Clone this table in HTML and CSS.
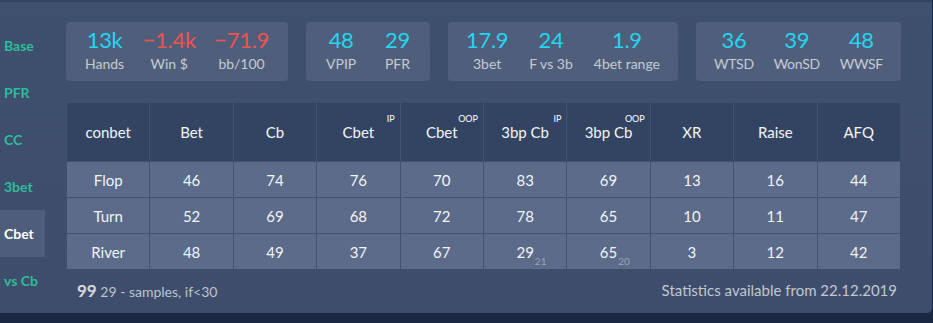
FILE: index.html
```html
<!DOCTYPE html>
<html lang="en">
<head>
<meta charset="utf-8">
<title>Stats</title>
<link rel="stylesheet" href="styles.css">
</head>
<body>
<div class="panel">
  <nav class="side">
    <div class="tab">Base</div>
    <div class="tab">PFR</div>
    <div class="tab">CC</div>
    <div class="tab">3bet</div>
    <div class="tab active">Cbet</div>
    <div class="tab">vs Cb</div>
  </nav>
  <main class="content">
    <div class="stats">
      <div class="box box-results">
        <div class="stat"><span class="num">13k</span><span class="lbl">Hands</span></div>
        <div class="stat"><span class="num neg">−1.4k</span><span class="lbl">Win $</span></div>
        <div class="stat"><span class="num neg">−71.9</span><span class="lbl">bb/100</span></div>
      </div>
      <div class="box box-preflop">
        <div class="stat"><span class="num">48</span><span class="lbl">VPIP</span></div>
        <div class="stat"><span class="num">29</span><span class="lbl">PFR</span></div>
      </div>
      <div class="box box-3bet">
        <div class="stat"><span class="num">17.9</span><span class="lbl">3bet</span></div>
        <div class="stat"><span class="num">24</span><span class="lbl">F vs 3b</span></div>
        <div class="stat"><span class="num">1.9</span><span class="lbl">4bet range</span></div>
      </div>
      <div class="box box-showdown">
        <div class="stat"><span class="num">36</span><span class="lbl">WTSD</span></div>
        <div class="stat"><span class="num">39</span><span class="lbl">WonSD</span></div>
        <div class="stat"><span class="num">48</span><span class="lbl">WWSF</span></div>
      </div>
    </div>

    <table class="grid">
      <thead>
        <tr>
          <th>conbet</th>
          <th>Bet</th>
          <th>Cb</th>
          <th>Cbet<sup class="pos">IP</sup></th>
          <th>Cbet<sup class="pos">OOP</sup></th>
          <th>3bp Cb<sup class="pos">IP</sup></th>
          <th>3bp Cb<sup class="pos">OOP</sup></th>
          <th>XR</th>
          <th>Raise</th>
          <th>AFQ</th>
        </tr>
      </thead>
      <tbody>
        <tr>
          <td>Flop</td><td>46</td><td>74</td><td>76</td><td>70</td><td>83</td><td>69</td><td>13</td><td>16</td><td>44</td>
        </tr>
        <tr>
          <td>Turn</td><td>52</td><td>69</td><td>68</td><td>72</td><td>78</td><td>65</td><td>10</td><td>11</td><td>47</td>
        </tr>
        <tr>
          <td>River</td><td>48</td><td>49</td><td>37</td><td>67</td>
          <td><span class="val">29<span class="sample">21</span></span></td>
          <td><span class="val">65<span class="sample">20</span></span></td>
          <td>3</td><td>12</td><td>42</td>
        </tr>
      </tbody>
    </table>

    <div class="foot">
      <div class="note"><b>99</b> 29 - samples, if&lt;30</div>
      <div class="since">Statistics available from 22.12.2019</div>
    </div>
  </main>
</div>
</body>
</html>
```

FILE: styles.css
```css
* { box-sizing: border-box; }

html, body {
  margin: 0;
  padding: 0;
  background: #1b2844;
  font-family: Lato, "Liberation Sans", sans-serif;
}

.panel {
  width: 932px;
  height: 313px;
  display: flex;
  background: linear-gradient(180deg, #3f4f6e 0%, #3d4d6b 100%);
  border-top: 2px solid #36455f;
  border-bottom-right-radius: 5px;
}

.side {
  width: 45px;
  flex: none;
  padding-top: 20px;
  display: flex;
  flex-direction: column;
}

.tab {
  height: 47px;
  display: flex;
  align-items: center;
  padding-left: 4px;
  font-size: 14px;
  font-weight: 700;
  color: #2dbd98;
}

.tab.active {
  background: #4e5d79;
  color: #ffffff;
}

.content {
  flex: 1;
  padding: 20px 0 0 21px;
  display: flex;
  flex-direction: column;
}

.stats {
  display: flex;
  gap: 18px;
}

.box {
  height: 59px;
  display: flex;
  justify-content: space-between;
  padding: 0 19px;
  background: #4f5f7b;
  border-radius: 4px;
}

.box-results { width: 222px; }
.box-preflop { width: 124px; padding: 0 20px; }
.box-3bet { width: 230px; padding: 0 18px; }
.box-showdown { width: 205px; padding: 0 18px; }

.stat {
  display: flex;
  flex-direction: column;
  align-items: center;
  padding-top: 3px;
  white-space: nowrap;
}

.num {
  font-size: 22px;
  line-height: 30px;
  letter-spacing: -0.3px;
  color: #22d5f0;
}

.num.neg {
  color: #ef5150;
}

.lbl {
  font-size: 14px;
  line-height: 18px;
  color: #c6cad3;
}

.box-showdown .lbl { letter-spacing: -0.3px; }

.grid {
  margin-top: 21px;
  width: 835px;
  table-layout: fixed;
  border-collapse: collapse;
  border: 1px solid #3e4e6c;
}

.grid th,
.grid td {
  border: 1px solid #43536f;
  text-align: center;
  position: relative;
  color: #f2f4f8;
}

.grid tr > :first-child { border-left-color: #3e4e6c; }
.grid tr > :last-child { border-right-color: #3e4e6c; }
.grid thead th { border-top-color: #3e4e6c; }
.grid tbody tr:last-child td { border-bottom-color: #3e4e6c; }

.grid th {
  height: 59px;
  background: #334462;
  font-size: 15px;
  font-weight: 400;
  padding: 0;
}

.grid td {
  height: 36px;
  background: #5b6b89;
  font-size: 15px;
  padding: 0;
}

.pos {
  position: absolute;
  top: 11px;
  right: 5px;
  font-size: 9px;
  line-height: 10px;
  color: #ffffff;
}

.val {
  position: relative;
}

.sample {
  position: absolute;
  left: 100%;
  bottom: -6px;
  margin-left: 1px;
  font-size: 10px;
  color: #98a3b6;
}

.foot {
  width: 835px;
  display: flex;
  justify-content: space-between;
  align-items: center;
  padding: 0 4px 0 11px;
  height: 40px;
}

.note {
  font-size: 14px;
  color: #bfc4ce;
}

.note b {
  font-size: 17px;
  color: #d3d7de;
}

.since {
  font-size: 15px;
  color: #c3c7d0;
}
```
